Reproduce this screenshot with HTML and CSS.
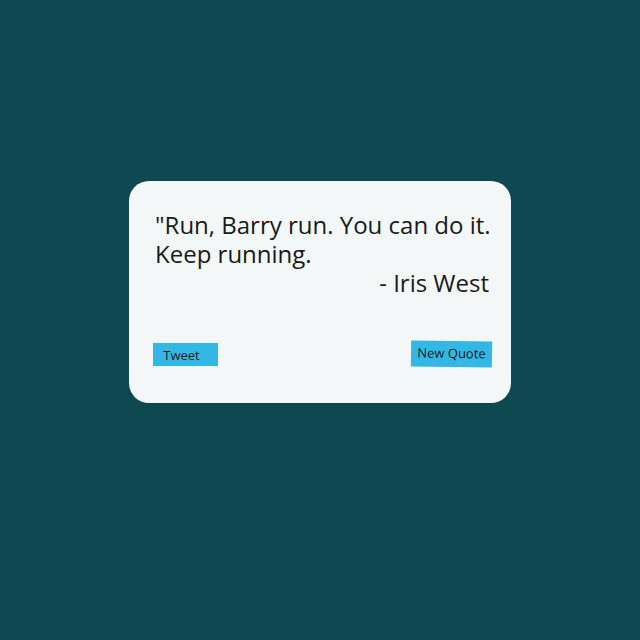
FILE: index.html
```html
<!DOCTYPE html>
<html>
<head>
<meta charset="utf-8">
<link rel="stylesheet" href="styles.css">
</head>
<body>
  <div class="card">
    <p class="quote">"Run, Barry run. You can do it. Keep running.</p>
    <p class="author">- Iris West</p>
    <div class="actions">
      <button class="btn tweet">Tweet</button>
      <button class="btn new">New Quote</button>
    </div>
  </div>
</body>
</html>
```
FILE: styles.css
```css
html, body {
  margin: 0;
  padding: 0;
}
body {
  background: #0e4951;
  width: 640px;
  height: 640px;
  font-family: "Open Sans", sans-serif;
  overflow: hidden;
}
.card {
  box-sizing: border-box;
  width: 382px;
  height: 222px;
  margin: 181px auto 0;
  background: #f3f7f8;
  border-radius: 20px;
  padding: 29px 20px 0 26px;
  color: #1a1a1a;
}
.quote {
  margin: 0;
  font-size: 24px;
  line-height: 29px;
}
.author {
  margin: 0;
  font-size: 24px;
  line-height: 29px;
  text-align: right;
  padding-right: 2px;
}
.actions {
  display: flex;
  justify-content: space-between;
  align-items: center;
  margin: 44px -1px 0 -2px;
}
.btn {
  font-family: "Open Sans", sans-serif;
  font-size: 13px;
  color: #1a1a1a;
  background: #33b8e6;
  border: none;
  border-radius: 0;
  padding: 0;
  margin: 0;
}
.tweet {
  width: 65px;
  height: 23px;
  padding-right: 8px;
  padding-top: 2px;
}
.new {
  width: 81px;
  height: 26px;
  transform: rotate(0.8deg);
  padding-bottom: 3px;
}
```
